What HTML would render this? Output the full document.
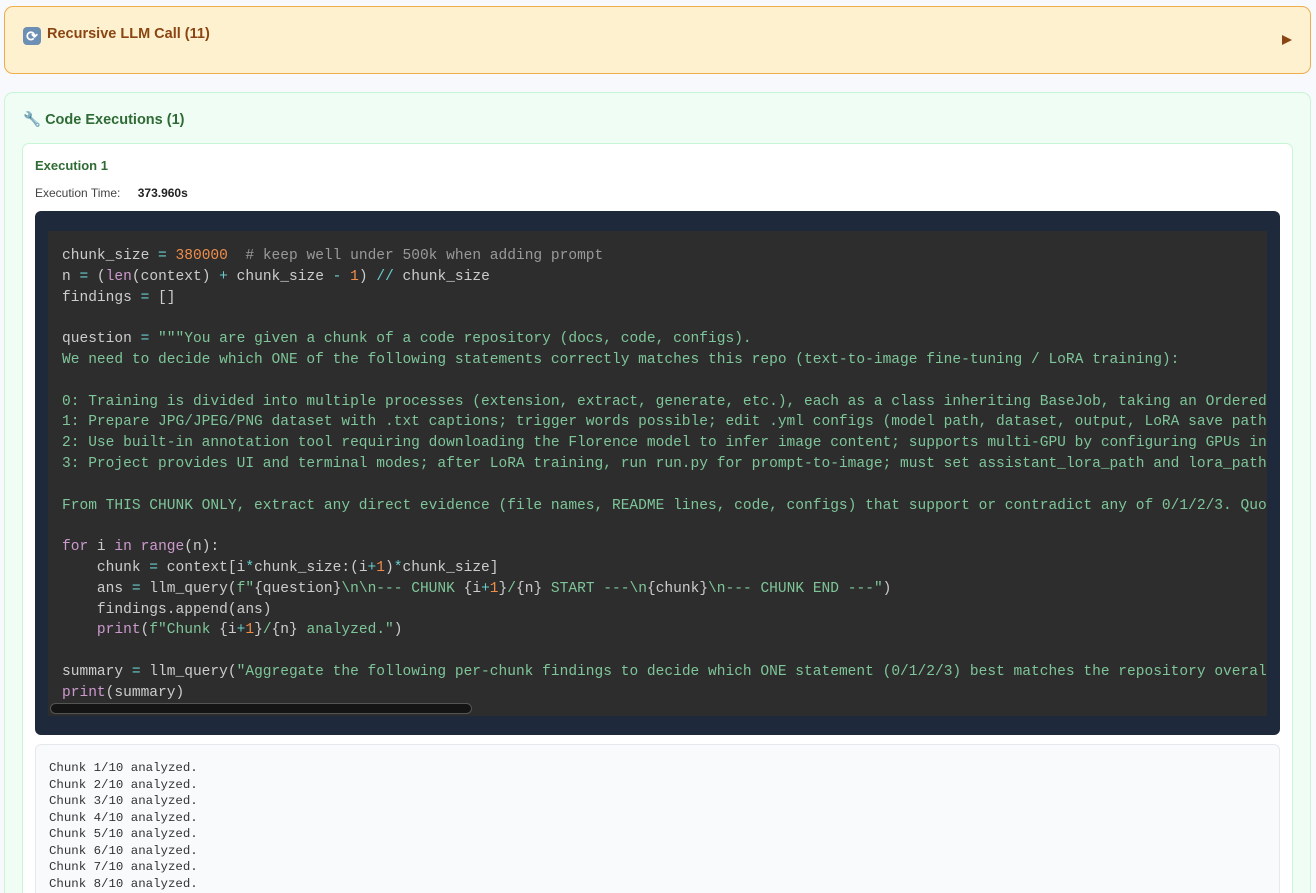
<!DOCTYPE html>
<html><head><meta charset="utf-8"><style>
*{box-sizing:border-box;margin:0;padding:0}
html,body{width:1316px;height:893px;overflow:hidden}
body{background:#f7f9fc;font-family:"Liberation Sans",sans-serif;position:relative}
.or{position:absolute;left:4px;top:6px;width:1307px;height:68px;background:#fdf1cf;border:1.5px solid #f0ad4e;border-radius:9px}
.or .t{position:absolute;left:18px;top:19px;font-size:14.5px;font-weight:bold;color:#8b4513}
.or .a{position:absolute;right:18px;top:28px;width:0;height:0;border-left:10px solid #8b4513;border-top:5.5px solid transparent;border-bottom:5.5px solid transparent}
.ic{display:inline-block;width:18px;height:18px;background:#6d8fb4;border-radius:4px;vertical-align:-3px;margin-right:6px;color:#fff;font-size:14px;line-height:18px;text-align:center}
.gr{position:absolute;left:4px;top:92px;width:1307px;height:801px;background:#f0fdf4;border:1.5px solid #c8f5d5;border-bottom:none;border-radius:9px 9px 0 0}
.gr .t{position:absolute;left:18px;top:18px;font-size:14.5px;font-weight:bold;color:#2f6b35}
.card{position:absolute;left:22px;top:143px;width:1271px;height:750px;background:#fff;border:1.5px solid #c8f5d5;border-bottom:none;border-radius:7px 7px 0 0}
.e1{position:absolute;left:35px;top:158px;font-size:13px;font-weight:bold;color:#2f6b35}
.et{position:absolute;left:35px;top:186px;font-size:12px;color:#444}
.et b{margin-left:14px;color:#222}
.code{position:absolute;left:35px;top:211px;width:1245px;height:524px;background:#1e293b;border-radius:6px}
pre{position:absolute;left:48px;top:231px;width:1219px;height:485px;background:#2d2d2d;overflow:hidden;font-family:"Liberation Mono",monospace;font-size:14.55px;line-height:20.8px;color:#ccc;padding:15px 0 0 14px;white-space:pre}
.n{color:#f08d49}.c{color:#999}.s{color:#7ec699}.k{color:#cc99cd}.o{color:#67cdcc}
.sb{position:absolute;left:50px;top:703px;width:422px;height:11px;background:#141414;border:1px solid #555;border-radius:6px}
.out{position:absolute;left:35px;top:744px;width:1245px;height:149px;background:#f8fafc;border:1.5px solid #e5e9ee;border-bottom:none;border-radius:6px 6px 0 0;font-family:"Liberation Mono",monospace;font-size:12.4px;line-height:16.5px;color:#333;padding:15px 0 0 13px;white-space:pre;overflow:hidden}
</style></head><body>
<div class="or"><div class="t"><span class="ic">⟳</span>Recursive LLM Call (11)</div><div class="a"></div></div>
<div class="gr"><div class="t">🔧 Code Executions (1)</div></div>
<div class="card"></div>
<div class="e1">Execution 1</div>
<div class="et">Execution Time: <b>373.960s</b></div>
<div class="code"></div>
<pre>chunk_size <span class="o">=</span> <span class="n">380000</span>  <span class="c"># keep well under 500k when adding prompt</span>
n <span class="o">=</span> (<span class="k">len</span>(context) <span class="o">+</span> chunk_size <span class="o">-</span> <span class="n">1</span>) <span class="o">//</span> chunk_size
findings <span class="o">=</span> []

question <span class="o">=</span> <span class="s">"""You are given a chunk of a code repository (docs, code, configs).
We need to decide which ONE of the following statements correctly matches this repo (text-to-image fine-tuning / LoRA training):

0: Training is divided into multiple processes (extension, extract, generate, etc.), each as a class inheriting BaseJob, taking an OrderedDict
1: Prepare JPG/JPEG/PNG dataset with .txt captions; trigger words possible; edit .yml configs (model path, dataset, output, LoRA save path
2: Use built-in annotation tool requiring downloading the Florence model to infer image content; supports multi-GPU by configuring GPUs in
3: Project provides UI and terminal modes; after LoRA training, run run.py for prompt-to-image; must set assistant_lora_path and lora_path

From THIS CHUNK ONLY, extract any direct evidence (file names, README lines, code, configs) that support or contradict any of 0/1/2/3. Quote</span>

<span class="k">for</span> i <span class="k">in</span> <span class="k">range</span>(n):
    chunk <span class="o">=</span> context[i<span class="o">*</span>chunk_size:(i<span class="o">+</span><span class="n">1</span>)<span class="o">*</span>chunk_size]
    ans <span class="o">=</span> llm_query(<span class="s">f"</span>{question}<span class="s">\n\n--- CHUNK </span>{i<span class="o">+</span><span class="n">1</span>}<span class="s">/</span>{n}<span class="s"> START ---\n</span>{chunk}<span class="s">\n--- CHUNK END ---"</span>)
    findings.append(ans)
    <span class="k">print</span>(<span class="s">f"Chunk </span>{i<span class="o">+</span><span class="n">1</span>}<span class="s">/</span>{n}<span class="s"> analyzed."</span>)

summary <span class="o">=</span> llm_query(<span class="s">"Aggregate the following per-chunk findings to decide which ONE statement (0/1/2/3) best matches the repository overall</span>
<span class="k">print</span>(summary)</pre>
<div class="sb"></div>
<div class="out">Chunk 1/10 analyzed.
Chunk 2/10 analyzed.
Chunk 3/10 analyzed.
Chunk 4/10 analyzed.
Chunk 5/10 analyzed.
Chunk 6/10 analyzed.
Chunk 7/10 analyzed.
Chunk 8/10 analyzed.</div>
</body></html>
